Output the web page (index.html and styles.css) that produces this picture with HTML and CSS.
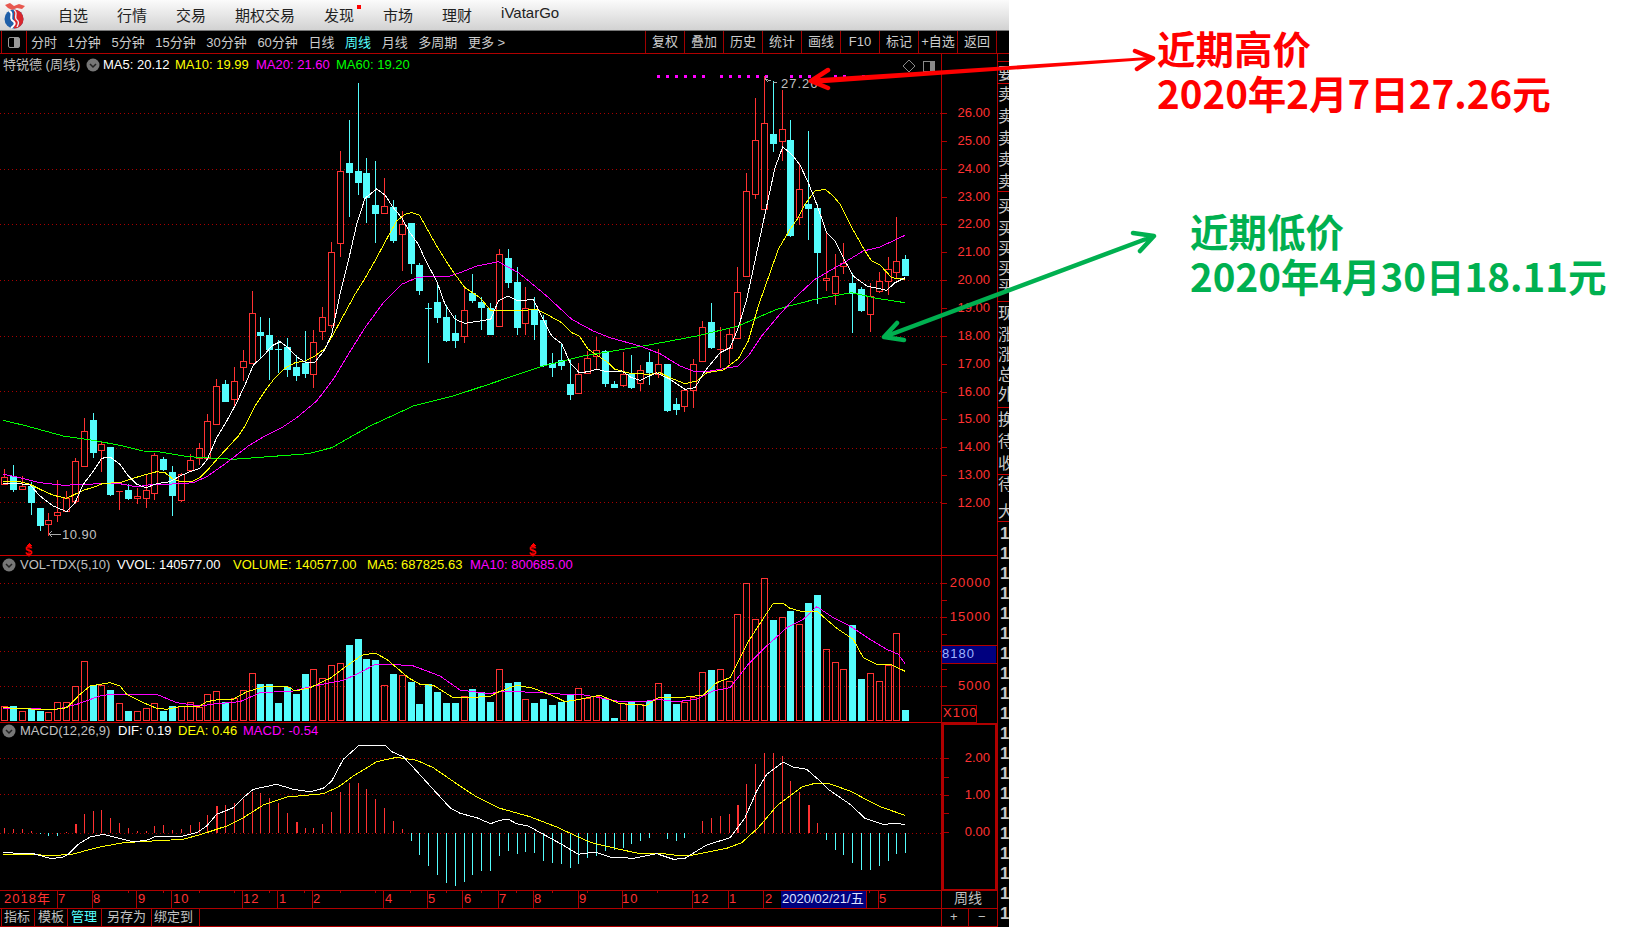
FILE: index.html
```html
<!DOCTYPE html>
<html>
<head>
  <title>特锐德 周线</title>
  <link rel="stylesheet" href="styles.css">
</head>
<body>
  <div class="app">
    <header class="menu">
      <svg class="logo" width="30" height="30" viewBox="0 0 30 30">
        <path d="M5 5 L10 3 L14 6 L19 4 L25 6 L22 9 L17 8 L12 10 L8 8 Z" fill="#e8584f"/>
        <circle cx="14" cy="19" r="9.5" fill="#1f5fa8"/>
        <path d="M14 9.5 A9.5 9.5 0 0 1 14 28.5 Z" fill="#d8262c"/>
        <path d="M9 11 C15 13 8 18 13 21 C17 24 13 26 11 28" fill="none" stroke="#fff" stroke-width="2"/>
        <path d="M14 10 C19 13 13 17 17 20 C20 22 18 25 17 27" fill="none" stroke="#e6eef5" stroke-width="1.4"/>
      </svg>
      <nav class="menu-items">
        <a>自选</a>
        <a>行情</a>
        <a>交易</a>
        <a>期权交易</a>
        <a class="has-dot">发现</a>
        <a>市场</a>
        <a>理财</a>
        <a>iVatarGo</a>
      </nav>
    </header>

    <div class="toolbar">
      <div class="tb-toggle"><span></span></div>
      <div class="tb-items">
        <a>分时</a>
        <a>1分钟</a>
        <a>5分钟</a>
        <a>15分钟</a>
        <a>30分钟</a>
        <a>60分钟</a>
        <a>日线</a>
        <a class="active">周线</a>
        <a>月线</a>
        <a>多周期</a>
        <a>更多 &gt;</a>
      </div>
      <div class="tb-cells">
        <a>复权</a>
        <a>叠加</a>
        <a>历史</a>
        <a>统计</a>
        <a>画线</a>
        <a>F10</a>
        <a>标记</a>
        <a>+自选</a>
        <a>返回</a>
      </div>
    </div>

    <svg class="stage" width="1009" height="874" viewBox="0 53 1009 874">
      <g id="grid"></g>
      <g id="axis"></g>

      <!-- main pane -->
      <g id="dots"></g>
      <g id="candles"></g>
      <g id="ma-lines"></g>
      <text class="t13 gray" x="3" y="68">特锐德 (周线)</text>
      <g id="head-icons"></g>
      <text class="t13 white" x="103" y="68">MA5: 20.12</text>
      <text class="t13 yellow" x="175" y="68">MA10: 19.99</text>
      <text class="t13 magenta" x="256" y="68">MA20: 21.60</text>
      <text class="t13 lime" x="336" y="68">MA60: 19.20</text>
      <path class="tick-arrow" d="M765 78 L771 80 M765 78 L768 75 M765 78 L768 81 M773 81 L777 81"/>
      <text class="t13 gray spaced" x="781" y="87">27.26</text>
      <path class="tick-arrow" d="M49 533 L61 533 M49 533 L52 530 M49 533 L52 536"/>
      <text class="t13 gray spaced-s" x="62" y="538">10.90</text>
      <path class="mark-tip" d="M29 542 L32 545 L26 545 Z"/>
      <text class="mark" x="25" y="554">$</text>
      <path class="mark-tip" d="M533 542 L536 545 L530 545 Z"/>
      <text class="mark" x="529" y="554">$</text>

      <!-- volume pane -->
      <g id="vol-bars"></g>
      <g id="vol-lines"></g>
      <text class="t13 gray" x="20" y="568">VOL-TDX(5,10)</text>
      <text class="t13 white" x="117" y="568">VVOL: 140577.00</text>
      <text class="t13 yellow" x="233" y="568">VOLUME: 140577.00</text>
      <text class="t13 yellow" x="367" y="568">MA5: 687825.63</text>
      <text class="t13 magenta" x="470" y="568">MA10: 800685.00</text>

      <!-- macd pane -->
      <g id="macd-bars"></g>
      <g id="macd-lines"></g>
      <text class="t13 gray" x="20" y="734">MACD(12,26,9)</text>
      <text class="t13 white" x="118" y="734">DIF: 0.19</text>
      <text class="t13 yellow" x="178" y="734">DEA: 0.46</text>
      <text class="t13 magenta" x="243" y="734">MACD: -0.54</text>

      <!-- date axis and tabs -->
      <g id="dates"></g>
      <rect class="date-box" x="781" y="890" width="85" height="17"/>
      <text class="t13 date-text" x="782" y="902">2020/02/21/五</text>
      <text class="t14 gray" x="954" y="902">周线</text>
      <text class="t13 gray" x="950" y="920">+</text>
      <text class="t13 gray" x="978" y="920">−</text>
      <g id="tabs"></g>

      <!-- side strip, cut by the window edge -->
      <g id="strip"></g>
    </svg>
  </div>

  <div class="note note-high">近期高价<br>2020年2月7日27.26元</div>
  <div class="note note-low">近期低价<br>2020年4月30日18.11元</div>

  <svg class="arrows" width="1639" height="927" viewBox="0 0 1639 927">
    <path class="arrow-red-fill" d="M812 78.5 L1153 56.8 L1153 59.6 L812 84 Z"/>
    <path class="arrow-red" d="M828 70 L811 81 L828 88 M1135 51 L1153 58.3 L1137 69"/>
    <path class="arrow-green" d="M884 337 L1154 236 M897 323 L884 337 L904 340 M1133 233 L1154 236 L1140 251"/>
  </svg>

  <script src="chart.js"></script>
</body>
</html>
```

FILE: styles.css
```css
body {
  margin: 0;
  background: #fff;
  font-family: "Liberation Sans", "Noto Sans CJK SC", sans-serif;
  overflow: hidden;
}

.app {
  width: 1009px;
  height: 927px;
  background: #000;
}

.menu {
  display: flex;
  align-items: center;
  height: 30px;
  background: linear-gradient(#fbfbfb, #d2d2d2);
  border-bottom: 1px solid #777;
}

.logo {
  flex: none;
}

.menu-items {
  display: flex;
  gap: 29px;
  margin-left: 28px;
  padding-bottom: 2px;
  font-size: 15px;
  color: #222;
}

.has-dot {
  position: relative;
}

.has-dot::after {
  content: "";
  position: absolute;
  top: 1px;
  right: -7px;
  width: 4px;
  height: 4px;
  background: #f00;
}

.toolbar {
  display: flex;
  align-items: center;
  height: 22px;
  background: #000;
  border-bottom: 1px solid #b00000;
  font-size: 13px;
  color: #ccc;
}

.tb-toggle {
  flex: none;
  width: 24px;
  height: 22px;
  margin-left: 1px;
  border-left: 1px solid #b00000;
  border-right: 1px solid #b00000;
  display: flex;
  align-items: center;
  justify-content: center;
}

.tb-toggle span {
  width: 10px;
  height: 9px;
  border: 1px solid #999;
  border-radius: 2px;
  background: linear-gradient(90deg, #000 55%, #999 55%);
}

.tb-items {
  display: flex;
  gap: 10.6px;
  margin-left: 4px;
  padding-bottom: 1px;
  white-space: nowrap;
}

.tb-items .active {
  color: #5ff;
}

.tb-cells {
  display: flex;
  margin-left: auto;
  margin-right: 12px;
  border-right: 1px solid #a00000;
}

.tb-cells a {
  width: 38px;
  height: 22px;
  line-height: 22px;
  text-align: center;
  border-left: 1px solid #a00000;
  white-space: nowrap;
}

.stage {
  display: block;
  shape-rendering: crispEdges;
}

.stage text {
  font-family: "Liberation Sans", "Noto Sans CJK SC", sans-serif;
}

.t13 { font-size: 13px; }
.t14 { font-size: 14px; }
.spaced { letter-spacing: 1px; }
.spaced-s { letter-spacing: 0.5px; }
.gray { fill: #c0c0c0; }
.white { fill: #fff; }
.yellow { fill: #ff0; }
.magenta { fill: #f0f; }
.lime { fill: #0f0; }
.cyan { fill: #5ff; }
.red { fill: #ff3232; }

.grid-line {
  stroke: #a80000;
  stroke-dasharray: 1 3;
}

.frame {
  stroke: #b00000;
  fill: none;
}

.frame-bright {
  stroke: #c80000;
  fill: none;
}

.frame-thick {
  stroke: #b00000;
  stroke-width: 2;
  fill: none;
}

.up {
  stroke: #ff3232;
  fill: none;
}

.down {
  stroke: #54fcfc;
  fill: #54fcfc;
}

.candle-body {
  fill: #000;
}

.ma {
  fill: none;
}

.ma-white { stroke: #fff; }
.ma-yellow { stroke: #ff0; }
.ma-magenta { stroke: #f0f; }
.ma-green { stroke: #0f0; }

.dot {
  fill: #f0f;
}

.tick-arrow {
  fill: none;
  stroke: #aaa;
}

.mark {
  fill: #f00;
  font-size: 13px;
  font-weight: bold;
}

.mark-tip {
  fill: #f00;
}

.date-box,
.price-box {
  fill: #00007f;
}

.date-text {
  fill: #dfe4ff;
}

.price-text {
  fill: #9fb4ff;
}

.strip-char {
  fill: #c8c8c8;
  font-size: 16px;
}

.strip-num {
  fill: #c8c8c8;
  font-size: 17px;
  font-weight: bold;
}

.head-circle {
  fill: #777;
}

.head-chevron {
  fill: none;
  stroke: #222;
  stroke-width: 1.5;
}

.icon-line {
  fill: none;
  stroke: #888;
}

.note {
  position: absolute;
  font-family: "Noto Sans CJK SC", sans-serif;
  font-size: 38.5px;
  font-weight: bold;
  line-height: 44.5px;
  white-space: nowrap;
}

.note-high {
  left: 1157px;
  top: 25px;
  color: #f00;
}

.note-low {
  left: 1190px;
  top: 208px;
  color: #00b050;
}

.arrows {
  position: absolute;
  left: 0;
  top: 0;
  pointer-events: none;
}

.arrow-red-fill {
  fill: #f00;
}

.arrow-red {
  fill: none;
  stroke: #f00;
  stroke-width: 4.5;
  stroke-linecap: round;
  stroke-linejoin: round;
}

.arrow-green {
  fill: none;
  stroke: #00b050;
  stroke-width: 4.5;
  stroke-linecap: round;
  stroke-linejoin: round;
}
```

FILE: chart.js
```js
// all chart numbers are read off at 3x: x = z / 3, y = paneTop + z / 3
const MAIN_TOP = 60, VOL_TOP = 550;

// kind, high, body top, body bottom, low
const candles = [
  "u1225,1247,1268,1270", "d1212,1245,1284,1292", "u1245,1276,1285,1287", "d1262,1275,1323,1362",
  "d1341,1341,1392,1410", "u1356,1378,1388,1425", "u1258,1354,1361,1383", "u1290,1310,1350,1352",
  "u1192,1200,1320,1330", "u1072,1111,1214,1214", "d1056,1077,1172,1190", "u1140,1150,1166,1232",
  "d1158,1158,1298,1306", "u1290,1290,1293,1346", "d1268,1287,1311,1317", "u1280,1306,1312,1328",
  "u1240,1286,1312,1340", "u1175,1183,1295,1318", "d1187,1194,1224,1230", "d1215,1233,1302,1365",
  "u1235,1240,1316,1323", "u1178,1198,1226,1228", "u1147,1162,1192,1212", "u1060,1081,1190,1192",
  "u955,974,1088,1090", "d958,969,1020,1024", "u918,961,1013,1040", "u867,901,919,960",
  "u690,757,906,910", "d768,813,822,890", "d771,822,865,957", "d838,864,866,935",
  "d832,858,925,948", "d883,918,942,960", "d810,905,935,950", "u808,844,938,980",
  "u738,769,811,838", "u543,574,792,800", "u270,331,545,588", "d178,306,332,468",
  "d66,329,362,402", "d292,337,407,487", "d300,432,456,545", "u351,434,455,455",
  "d418,438,537,546", "u450,490,518,630", "d487,487,605,638", "d606,613,686,702",
  "d725,742,744,905", "d672,723,768,786", "d733,768,836,842", "d762,816,838,860",
  "u682,748,826,846", "d640,696,716,725", "d708,723,738,808", "d726,740,818,822",
  "u565,580,796,798", "d565,591,662,680", "d618,663,797,822", "u678,742,785,822",
  "d708,743,788,838", "d762,777,912,918", "d876,906,917,947", "d846,898,911,927",
  "d895,969,998,1016", "u905,940,996,998", "u870,891,935,938", "u828,868,885,925",
  "d868,871,965,977", "d960,969,977,980", "u873,939,973,977", "d882,938,978,984",
  "u912,926,967,990", "d873,903,933,972", "u865,910,938,950", "d908,908,1047,1052",
  "d1012,1029,1043,1062", "u980,987,1036,1052", "u895,910,988,1040", "u780,799,901,903",
  "d727,784,857,863", "u798,865,868,922", "u800,820,860,910", "u618,694,830,835",
  "u337,391,646,648", "u111,238,398,413", "u46,187,445,447", "d60,218,245,272",
  "u88,205,241,300", "d178,238,522,528", "u305,385,469,492", "d210,428,441,537",
  "d428,441,572,728", "u515,652,658,690", "u580,644,695,732", "u546,606,615,638",
  "d635,666,696,816", "d677,684,748,752", "u667,706,758,812", "u633,661,691,697",
  "u588,625,661,702", "u468,601,632,650", "d582,594,641,645"
];

const volTops = [465,465,481,473,479,484,454,454,405,331,402,402,417,456,480,481,472,457,479,465,
  465,454,468,430,421,454,442,418,367,399,399,456,408,428,369,355,382,343,337,282,
  264,324,327,403,369,373,393,459,400,423,456,456,435,414,423,453,355,396,393,444,
  456,444,462,454,432,412,442,435,445,500,457,454,460,450,397,430,458,453,438,364,
  357,354,390,190,97,205,82,207,197,180,218,156,132,295,334,355,222,384,367,391,341,247,477];

const macdEnds = [832,834,834,840,850,855,855,843,820,790,780,778,802,817,832,840,840,826,822,837,
  834,823,813,793,765,762,755,745,722,725,742,755,787,813,831,832,819,784,723,696,
  696,714,745,771,811,835,870,912,945,972,996,1004,993,972,960,960,915,900,908,904,
  905,930,936,940,950,938,920,915,900,898,890,880,870,860,846,864,870,860,846,810,
  800,796,790,762,700,640,605,605,615,690,722,762,816,866,897,912,935,957,956,945,930,908,905];
const macdThick = [8, 24, 33, 83, 91];

// second part of each line was read from the right hand crops, so it gets 1500 added
const ma5 = [[10,1268,60,1268,90,1272,120,1305,160,1335,200,1352,225,1325,250,1270,280,1230,305,1192,330,1188,360,1210,385,1245,410,1270,438,1280,470,1268,510,1262,540,1245,570,1232,600,1222,622,1195,650,1130,680,1080,710,1025,740,960,760,912,790,885,815,855,840,842,865,860,890,888,915,903,945,903,975,865,995,820,1020,700,1045,600,1070,490,1095,412,1130,384,1155,402,1180,440,1205,470,1230,515,1255,550,1280,605,1310,660,1335,730,1365,775,1395,787,1440,780,1472,775,1495,720,1525,705,1555,720],
  [100,715,110,735,130,775,155,825,185,848,210,905,238,935,265,932,290,925,320,932,365,930,395,950,420,958,470,935,510,955,555,985,585,980,615,930,660,875,690,860,715,800,740,715,770,575,800,435,825,320,848,258,875,280,900,312,925,365,950,430,980,515,1005,540,1030,590,1060,645,1100,675,1160,688,1185,665,1215,650]];
const ma10 = [[10,1262,60,1262,90,1270,120,1285,160,1303,200,1312,225,1300,250,1288,285,1277,310,1267,360,1265,395,1253,430,1243,470,1232,495,1235,520,1255,545,1262,575,1262,600,1250,625,1225,655,1190,680,1163,715,1125,735,1095,765,1035,795,990,825,950,855,922,885,905,915,900,945,885,975,862,1000,820,1035,755,1065,700,1095,652,1130,590,1165,525,1190,480,1215,460,1235,455,1258,462,1285,510,1310,555,1340,603,1365,640,1395,680,1440,710,1472,748,1500,749,1550,750],
  [110,745,135,757,185,785,215,815,238,825,265,865,295,885,325,905,345,925,390,937,450,940,480,935,510,950,555,968,590,960,620,935,670,927,715,893,745,840,775,735,805,650,835,565,870,505,895,470,915,430,945,390,975,385,1000,405,1020,430,1050,490,1095,570,1115,600,1140,612,1175,650,1215,655]];
const ma20 = [[10,1240,60,1250,120,1265,190,1273,300,1268,360,1268,410,1278,445,1272,540,1268,580,1265,620,1247,680,1205,745,1155,795,1125,845,1100,890,1070,950,1020,1000,955,1045,880,1095,800,1150,725,1205,670,1250,650,1300,645,1350,645,1380,635,1430,615,1495,602],
  [55,635,80,655,140,705,215,775,280,810,330,830,420,855,480,878,540,915,580,930,620,932,715,915,745,885,785,825,835,765,885,710,945,655,1040,600,1090,570,1140,558,1215,523]];
const ma60 = [[10,1078,80,1095,190,1125,280,1138,370,1155,430,1170,475,1172,565,1187,700,1195,805,1187,925,1178,995,1160,1110,1095,1175,1065,1240,1035,1360,1005,1460,972],
  [60,938,130,915,250,885,430,855,590,825,715,795,830,745,945,715,1055,695,1130,712,1215,725]];

const volMa5 = [[10,470,110,475,150,477,200,470,240,430,270,405,330,395,360,405,380,430,430,455,470,472,500,475,540,467,600,465,620,452,660,445,700,445,740,422,800,405,865,408,885,420,930,410,990,382,1040,345,1085,313,1125,306,1160,325,1190,350,1225,380,1260,400,1300,403,1360,440,1470,437,1490,425],
  [50,403,100,412,160,435,195,452,240,445,300,433,360,458,440,463,475,440,540,440,610,432,650,395,690,380,740,280,775,225,820,157,850,157,870,172,900,180,950,180,1010,232,1060,265,1090,320,1135,342,1175,341,1215,361]];
const volMa10 = [[10,472,170,475,230,460,300,435,330,430,470,430,530,455,600,465,650,458,720,452,780,425,880,420,940,405,1030,388,1080,365,1125,340,1235,343,1320,375,1380,417,1470,428],
  [0,422,50,422,130,425,190,430,240,430,300,440,360,452,430,452,470,445,530,452,590,445,640,420,690,410,745,340,800,285,860,230,910,205,950,167,1000,200,1050,225,1110,265,1160,295,1195,310,1215,338]];
const dif = [[10,905,100,908,150,922,185,920,205,910,235,880,270,858,310,850,350,860,400,872,440,868,470,855,540,857,590,845,620,825,650,790,700,770,730,740,760,715,830,700,880,715,930,722,970,712,995,690,1030,625,1075,585,1155,583,1175,602,1210,617,1245,655,1295,710,1350,770,1380,787,1430,800,1472,818],
  [0,808,25,805,50,818,85,825,130,850,185,880,235,910,285,903,330,918,400,922,470,908,520,925,555,922,590,900,620,882,690,860,735,800,770,720,800,670,850,633,880,648,920,655,960,690,985,715,1050,760,1095,802,1150,820,1195,817,1215,822]];
const dea = [[10,910,110,910,140,915,215,910,300,888,370,875,420,872,550,865,610,848,680,825,730,800,790,762,860,738,970,728,1015,708,1060,675,1130,632,1190,619,1250,628,1300,650,1380,705,1430,738,1490,767],
  [0,772,90,797,170,828,235,858,275,875,345,892,420,908,490,908,530,913,580,912,680,892,725,875,775,830,830,765,905,708,945,697,985,697,1050,720,1140,767,1215,793]];

function cx(i) {
  return Math.round(4.33 + 8.833 * i);
}

function zy(z, top) {
  return Math.round(top + z / 3);
}

function hline(cls, y, x1, x2) {
  return `<line class="${cls}" x1="${x1}" x2="${x2}" y1="${y + 0.5}" y2="${y + 0.5}"/>`;
}

function vline(cls, x, y1, y2) {
  return `<line class="${cls}" x1="${x + 0.5}" x2="${x + 0.5}" y1="${y1}" y2="${y2}"/>`;
}

function text(cls, x, y, s, anchor) {
  return `<text class="${cls}" x="${x}" y="${y}"${anchor ? ' text-anchor="end"' : ""}>${s}</text>`;
}

function polyline(cls, parts, top) {
  let pts = [];
  parts.forEach((part, n) => {
    for (let i = 0; i < part.length; i += 2) {
      pts.push(((part[i] + (n ? 1500 : 0)) / 3).toFixed(1) + "," + (top + part[i + 1] / 3).toFixed(1));
    }
  });
  return `<polyline class="ma ${cls}" points="${pts.join(" ")}"/>`;
}

function drawCandles() {
  let html = "";
  candles.forEach((c, i) => {
    const kind = c[0] === "u" ? "up" : "down";
    const [h, t, b, l] = c.slice(1).split(",").map(z => zy(+z, MAIN_TOP));
    const x = cx(i);
    html += vline(kind, x, h, l);
    if (b - t < 2) {
      html += hline(kind, t, x - 3, x + 4);
    } else if (kind === "up") {
      html += `<rect class="up candle-body" x="${x - 2.5}" y="${t + 0.5}" width="6" height="${b - t}"/>`;
    } else {
      html += `<rect class="down" x="${x - 2.5}" y="${t + 0.5}" width="6" height="${b - t}"/>`;
    }
  });
  document.getElementById("candles").innerHTML = html;
}

function drawVolume() {
  let html = "";
  volTops.forEach((z, i) => {
    const kind = candles[i][0] === "u" ? "up" : "down";
    const top = zy(z, VOL_TOP);
    html += `<rect class="${kind}" x="${cx(i) - 2.5}" y="${top + 0.5}" width="6" height="${719 - top}"/>`;
  });
  document.getElementById("vol-bars").innerHTML = html;
}

function drawMacd() {
  const zero = zy(845, VOL_TOP);
  let html = "";
  macdEnds.forEach((z, i) => {
    const y = zy(z, VOL_TOP);
    const cls = y < zero ? "up" : "down";
    html += vline(cls, cx(i), Math.min(y, zero), Math.max(y, zero));
    if (macdThick.includes(i)) html += vline(cls, cx(i) + 1, y, zero);
  });
  document.getElementById("macd-bars").innerHTML = html;
}

function drawGrid() {
  const main = [157, 325, 490, 658, 825, 991, 1160, 1324];
  const lower = [95, 198, 301, 404, 622, 730, 845];
  let html = "";
  main.forEach(z => html += hline("grid-line", zy(z, MAIN_TOP), 0, 941));
  lower.forEach(z => html += hline("grid-line", zy(z, VOL_TOP), 0, 941));
  document.getElementById("grid").innerHTML = html;
}

function drawAxis() {
  let html = "";
  // pane borders
  html += vline("frame", 941, 53, 925);
  html += vline("frame", 997, 53, 927);
  html += hline("frame-bright", 554, 0, 997);
  html += hline("frame-bright", 721, 0, 941);
  html += hline("frame", 889, 0, 997);
  html += hline("frame", 907, 0, 997);
  html += hline("frame", 925, 0, 997);
  html += `<rect class="frame-thick" x="943" y="723" width="53" height="166"/>`;
  html += vline("frame", 968, 907, 925);

  // price scale
  for (let v = 26; v >= 12; v--) {
    const y = Math.round(112 + (26 - v) * 27.85);
    html += hline("frame", y, 941, 947);
    html += text("t13 red", 990, y + 4, v + ".00", true);
  }
  // volume scale
  [[582, "20000"], [616, "15000"], [685, "5000"]].forEach(([y, s]) => {
    html += text("t13 red spaced", 991, y + 4, s, true);
  });
  [582, 599, 616, 633, 668, 685].forEach(y => html += hline("frame", y, 941, 947));
  html += `<rect class="price-box" x="942" y="645" width="54" height="17"/>`;
  html += hline("frame", 644, 941, 997) + hline("frame", 662, 941, 997);
  html += text("t13 price-text spaced", 942, 657, "8180");
  html += `<rect class="frame" x="941.5" y="704.5" width="35" height="17"/>`;
  html += text("t13 red spaced", 943, 716, "X100");
  // macd scale
  [[757, "2.00"], [794, "1.00"], [831, "0.00"]].forEach(([y, s]) => {
    html += text("t13 red", 990, y + 4, s, true);
  });
  [757, 776, 794, 812, 831].forEach(y => html += hline("frame", y, 943, 949));
  document.getElementById("axis").innerHTML = html;
}

function drawDots() {
  const xs = [];
  for (let k = 0; k < 6; k++) xs.push(657 + 8.9 * k);
  for (let k = 0; k < 6; k++) xs.push(720 + 8.9 * k);
  for (let k = 0; k < 3; k++) xs.push(790 + 8.9 * k);
  xs.push(834, 843, 862, 870);
  document.getElementById("dots").innerHTML =
    xs.map(x => `<rect class="dot" x="${Math.round(x)}" y="74" width="3" height="3"/>`).join("");
}

function drawHeadIcons() {
  let html = "";
  [[93, 64], [9, 564], [9, 730]].forEach(([x, y]) => {
    html += `<circle class="head-circle" cx="${x}" cy="${y}" r="6.5" shape-rendering="auto"/>`;
    html += `<path class="head-chevron" d="M${x - 3} ${y - 1} L${x} ${y + 2} L${x + 3} ${y - 1}" shape-rendering="auto"/>`;
  });
  html += `<path class="icon-line" d="M909 59 L915 65 L909 71 L903 65 Z" shape-rendering="auto"/>`;
  html += `<rect class="icon-line" x="923.5" y="60.5" width="11" height="10" rx="1"/>`;
  html += `<rect x="930" y="61" width="4" height="9" fill="#888"/>`;
  document.getElementById("head-icons").innerHTML = html;
}

function drawDates() {
  const labels = [[4, "2018年"], [58, "7"], [93, "8"], [138, "9"], [173, "10"], [243, "12"], [279, "1"], [313, "2"],
    [385, "4"], [428, "5"], [464, "6"], [499, "7"], [534, "8"], [579, "9"], [622, "10"], [693, "12"], [729, "1"],
    [765, "2"], [879, "5"]];
  const seps = [57, 92, 136, 171, 242, 277, 312, 383, 427, 462, 498, 533, 578, 622, 692, 728, 763, 866, 878];
  let html = "";
  seps.forEach(x => html += vline("frame", x, 890, 907));
  for (let x = 22; x < 870; x += 35.3) html += vline("frame", Math.round(x), 890, 892);
  labels.forEach(([x, s]) => html += text("t13 red spaced", x, 902, s));
  document.getElementById("dates").innerHTML = html;
}

function drawTabs() {
  const tabs = [[4, "指标", "gray"], [38, "模板", "gray"], [71, "管理", "cyan"], [107, "另存为", "gray"], [154, "绑定到", "gray"]];
  let html = "";
  [1, 34, 67, 101, 151, 199].forEach(x => html += vline("frame", x, 907, 925));
  tabs.forEach(([x, s, cls]) => html += text("t13 " + cls, x, 920, s));
  document.getElementById("tabs").innerHTML = html;
}

function drawStrip() {
  const chars = [[72, "要"], [93, "卖"], [115, "卖"], [137, "卖"], [158, "卖"], [180, "卖"],
    [205, "买"], [227, "买"], [247, "买"], [267, "买"], [285, "买"],
    [312, "现"], [333, "涨"], [353, "涨"], [373, "总"], [393, "外"],
    [418, "换"], [440, "待"], [462, "收"], [483, "待"], [510, "大"]];
  let html = "";
  chars.forEach(([y, s]) => html += text("strip-char", 998, y + 6, s));
  [60, 82, 190, 300, 406, 473, 520].forEach(y => html += hline("frame-bright", y, 997, 1009));
  for (let k = 0; k < 20; k++) {
    html += text("strip-num", 1000, 538 + k * 20, k === 19 ? "15" : "1");
  }
  document.getElementById("strip").innerHTML = html;
}

drawGrid();
drawAxis();
drawDots();
drawCandles();
drawVolume();
drawMacd();
drawHeadIcons();
drawDates();
drawTabs();
drawStrip();

document.getElementById("ma-lines").innerHTML =
  polyline("ma-green", ma60, MAIN_TOP) + polyline("ma-magenta", ma20, MAIN_TOP) +
  polyline("ma-yellow", ma10, MAIN_TOP) + polyline("ma-white", ma5, MAIN_TOP);
document.getElementById("vol-lines").innerHTML =
  polyline("ma-magenta", volMa10, VOL_TOP) + polyline("ma-yellow", volMa5, VOL_TOP);
document.getElementById("macd-lines").innerHTML =
  polyline("ma-yellow", dea, VOL_TOP) + polyline("ma-white", dif, VOL_TOP);
```
